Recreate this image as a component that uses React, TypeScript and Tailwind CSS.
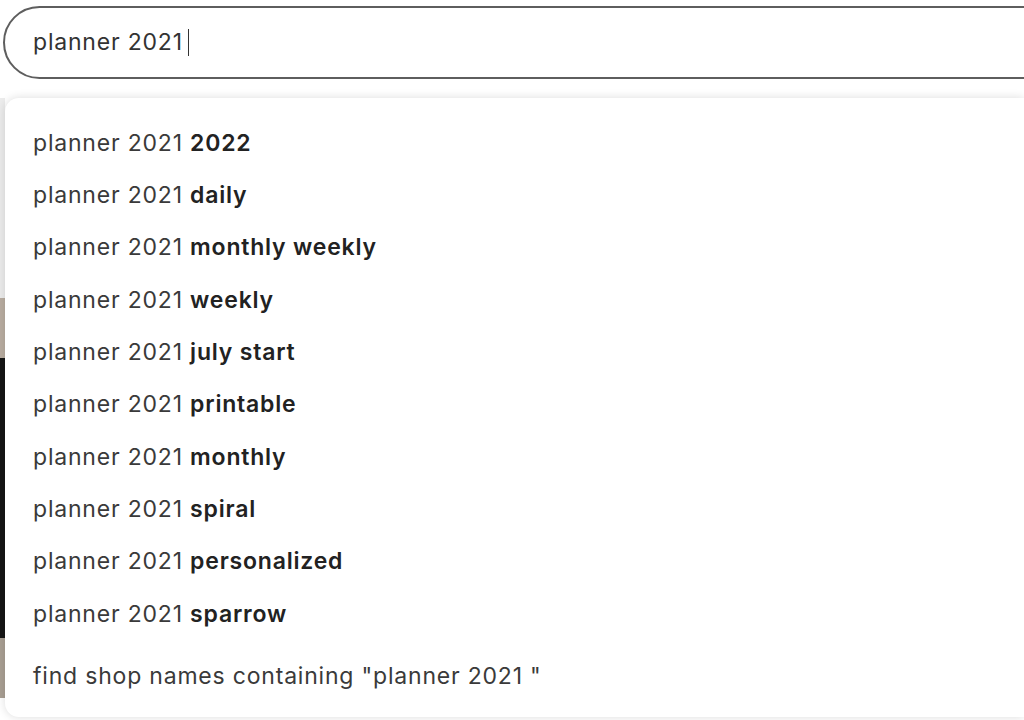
import React from "react"

const suggestions = [
  "2022",
  "daily",
  "monthly weekly",
  "weekly",
  "july start",
  "printable",
  "monthly",
  "spiral",
  "personalized",
  "sparrow",
]

export default function App() {
  return (
    <div
      className="w-[1024px] h-[720px] overflow-hidden bg-white text-[#222]"
      style={{ fontFamily: "Inter, 'Noto Sans', sans-serif" }}
    >
      <div className="pt-[6px] pl-[3px]">
        <div className="w-[1100px] h-[73px] rounded-full border-2 border-[#5e5e5e] bg-white flex items-center pl-[28px]">
          <span className="text-[23px] text-[#333] tracking-[0.8px]">planner 2021</span>
          <span className="ml-[5px] w-[1.5px] h-[27px] bg-[#333]" />
        </div>
      </div>

      <div className="flex mt-[19px] h-[700px]">
        <div className="w-[5px] flex flex-col shrink-0">
          <div className="h-[200px] bg-[#ececec]" />
          <div className="h-[60px] bg-[#b9ada1]" />
          <div className="h-[280px] bg-[#151515]" />
          <div className="h-[60px] bg-[#a99f93]" />
        </div>
        <div className="w-[1100px] h-[619px] bg-white rounded-l-[14px] shadow-[0_0_10px_rgba(0,0,0,0.14)] pt-[19px]">
          {suggestions.map((s) => (
            <div key={s} className="h-[52.3px] flex items-center pl-[28px] text-[23px] tracking-[0.8px]">
              <span className="text-[#3a3a3a]">planner 2021&nbsp;</span>
              <span className="font-semibold text-[#222]">{s}</span>
            </div>
          ))}
          <div className="h-[52px] mt-[10px] flex items-center pl-[28px] text-[23px] tracking-[0.8px] text-[#3a3a3a]">
            find shop names containing "planner 2021 "
          </div>
        </div>
      </div>
    </div>
  )
}
